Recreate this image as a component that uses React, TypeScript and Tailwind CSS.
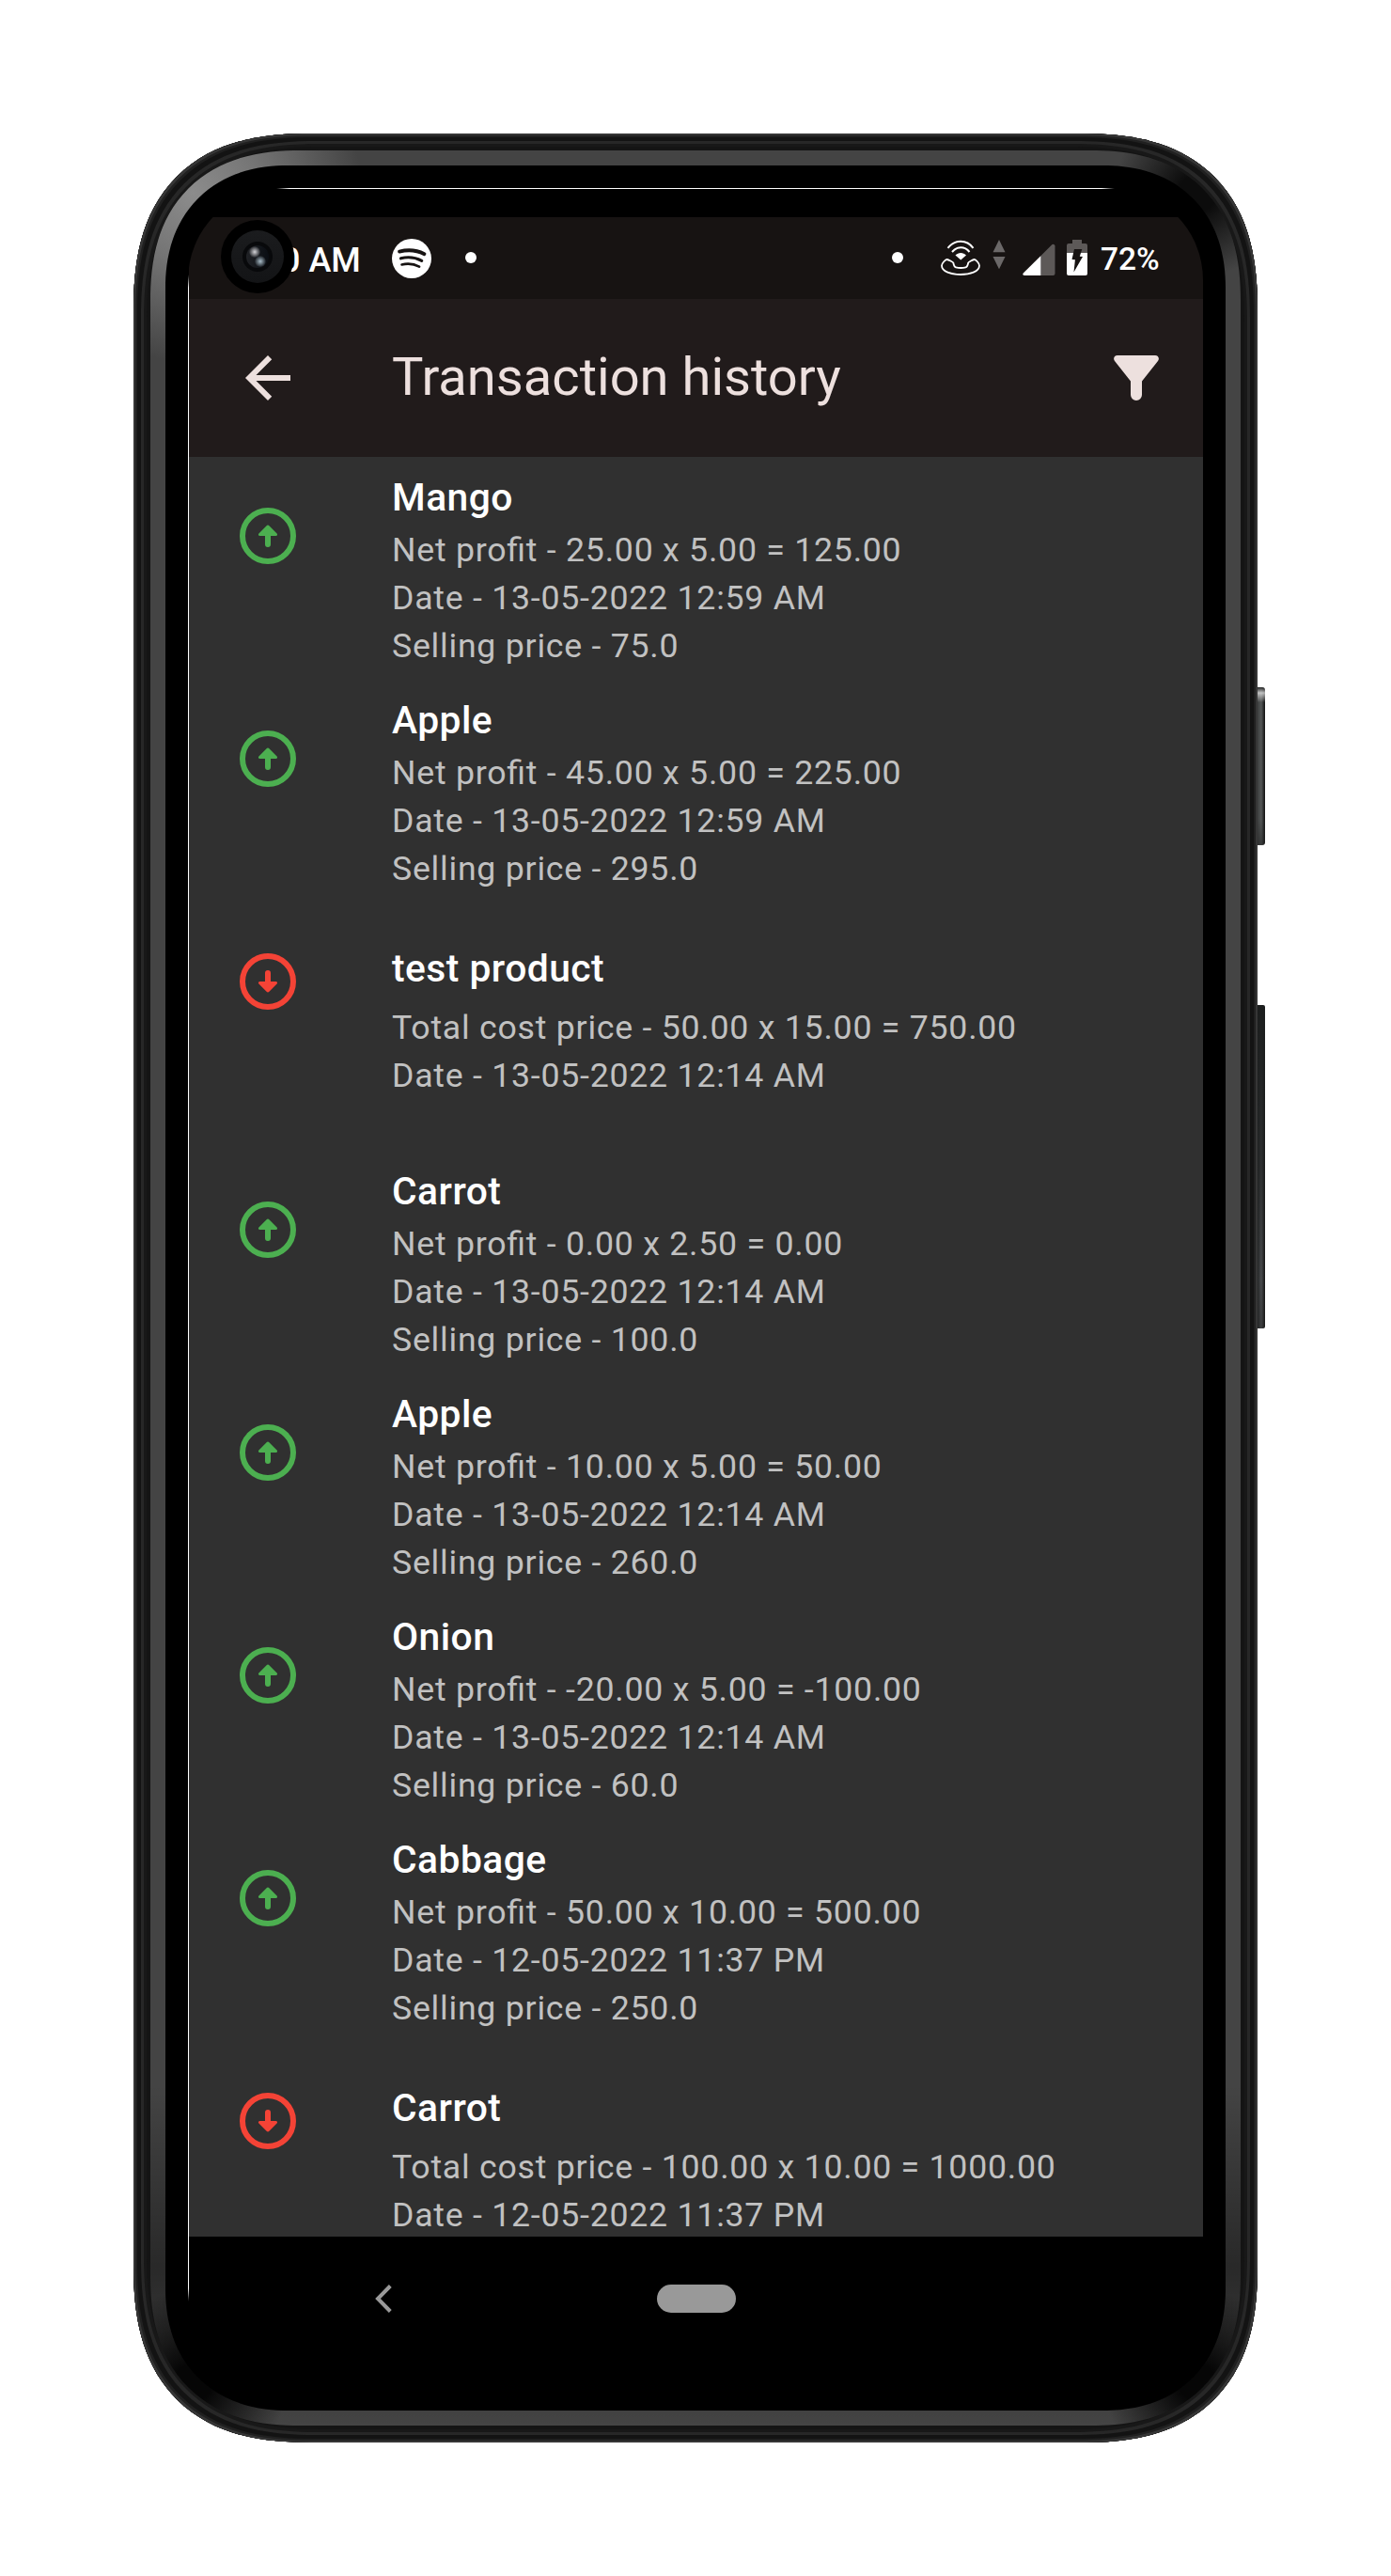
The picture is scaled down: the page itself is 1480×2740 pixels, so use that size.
import React from "react";

type Entry = {
  name: string;
  lines: string[];
  kind: "sale" | "purchase";
};

const entries: Entry[] = [
  { name: "Mango", kind: "sale", lines: ["Net profit - 25.00 x 5.00 = 125.00", "Date - 13-05-2022 12:59 AM", "Selling price - 75.0"] },
  { name: "Apple", kind: "sale", lines: ["Net profit - 45.00 x 5.00 = 225.00", "Date - 13-05-2022 12:59 AM", "Selling price - 295.0"] },
  { name: "test product", kind: "purchase", lines: ["Total cost price - 50.00 x 15.00 = 750.00", "Date - 13-05-2022 12:14 AM"] },
  { name: "Carrot", kind: "sale", lines: ["Net profit - 0.00 x 2.50 = 0.00", "Date - 13-05-2022 12:14 AM", "Selling price - 100.0"] },
  { name: "Apple", kind: "sale", lines: ["Net profit - 10.00 x 5.00 = 50.00", "Date - 13-05-2022 12:14 AM", "Selling price - 260.0"] },
  { name: "Onion", kind: "sale", lines: ["Net profit - -20.00 x 5.00 = -100.00", "Date - 13-05-2022 12:14 AM", "Selling price - 60.0"] },
  { name: "Cabbage", kind: "sale", lines: ["Net profit - 50.00 x 10.00 = 500.00", "Date - 12-05-2022 11:37 PM", "Selling price - 250.0"] },
  { name: "Carrot", kind: "purchase", lines: ["Total cost price - 100.00 x 10.00 = 1000.00", "Date - 12-05-2022 11:37 PM"] },
];

function DirectionIcon({ down }: { down: boolean }) {
  return (
    <svg
      viewBox="0 0 60 60"
      className={down ? "size-[60px] rotate-180 text-[#f44336]" : "size-[60px] text-[#4caf50]"}
      fill="none"
    >
      <circle cx="30" cy="30" r="27" stroke="currentColor" strokeWidth="6" />
      <path
        d="M28.6 19.2a2 2 0 0 1 2.8 0l8.2 8.2c1 1 .3 2.6-1 2.6H33v9a3 3 0 0 1-6 0v-9h-5.600c-1.300 0-2-1.600-1-2.600z"
        fill="currentColor"
      />
    </svg>
  );
}

function Row({ entry }: { entry: Entry }) {
  const sale = entry.kind === "sale";
  return (
    <li className={sale ? "flex h-[237px] shrink-0" : "flex h-[264px] shrink-0"}>
      <div className="w-[216px] shrink-0 pt-[54px] pl-[54px]">
        <DirectionIcon down={!sale} />
      </div>
      <div className={sale ? "pt-[13px]" : "pt-10"}>
        <h2 className="text-[40.8px] leading-[60px] font-medium tracking-[0.45px] whitespace-nowrap text-white">
          {entry.name}
        </h2>
        <div className={sale ? "pt-px" : "pt-2"}>
          {entry.lines.map((line) => (
            <p
              key={line}
              className="text-[35.7px] leading-[51px] tracking-[0.75px] whitespace-nowrap text-[#c1c1c1] [font-feature-settings:'liga']"
            >
              {line}
            </p>
          ))}
        </div>
      </div>
    </li>
  );
}

function StatusBar() {
  return (
    <div className="flex h-[87px] shrink-0 bg-[#171312] text-white">
      <span className="ml-[98px] w-[96px] pt-[25px] text-[36px] leading-[42px] font-medium whitespace-nowrap">0 AM</span>
      <svg viewBox="0 0 42 42" className="mt-[23px] ml-[22px] size-[42px]" fill="none">
        <circle cx="21" cy="21" r="21" fill="#fff" />
        <g stroke="#171312" strokeLinecap="round">
          <path d="M8 13.600c9-2.300 18.500-1.500 26.500 2.600" strokeWidth="3.800" />
          <path d="M9.500 20.800c7.600-1.900 15.500-1 22.200 2.500" strokeWidth="3.200" />
          <path d="M10.500 27.400c6.400-1.500 13-.8 18.600 2.200" strokeWidth="2.600" />
        </g>
      </svg>
      <span className="mt-[37px] ml-[36px] size-3 rounded-full bg-white" />
      <span className="mt-[37px] ml-[442px] size-3 rounded-full bg-white" />
      <svg viewBox="0 0 42 38" className="mt-[24px] ml-[40px] h-[38px] w-[42px]" fill="none" stroke="#fff">
        <path d="M7.500 8.800C15-.6 27.500-.6 34.500 8.800" strokeWidth="2" />
        <path d="M12 13c5-6.200 13.500-6.200 18.500 0" strokeWidth="2" />
        <path d="M15.500 16.500c3-3.500 8.500-3.500 11.500 0l-5.700 5z" fill="#fff" stroke="none" />
        <path
          d="M6.500 21c1.500.3 6.500 2.500 6.800 3.500.5 2.500 1.200 4.500 2.700 4.800 3 .8 7.500.8 10.500 0 1.500-.3 2.200-2.300 2.700-4.800.3-1 5-3.200 6.500-3.500 1.300-.2 5.300 4 5.300 6.500C41 34 31 37 21 37S1 34 1 27.500C1 25 5.200 20.800 6.500 21z"
          strokeWidth="1.800"
        />
      </svg>
      <svg viewBox="0 0 14 32" className="mt-[24px] ml-[13px] h-8 w-[14px]" fill="#6b6868">
        <path d="M7 0l6.500 13.300H.5zM.5 18h13L7 31.300z" />
      </svg>
      <svg viewBox="0 0 35 35" className="mt-[28px] ml-[18px] size-[35px]">
        <path d="M31.500 1a2 2 0 0 1 3 1.500V32a2 2 0 0 1-2 2H20V12.500z" fill="#5d5958" />
        <path d="M19.500 13v21H2c-2 0-2.200-1.500-1-2.700z" fill="#fff" />
      </svg>
      <svg viewBox="0 0 22 38" className="mt-[24px] ml-[12px] h-[38px] w-[22px]">
        <path d="M6 0h10v4h4a2 2 0 0 1 2 2v8H0V6a2 2 0 0 1 2-2h4z" fill="#5d5958" />
        <path d="M0 14h22v22a2 2 0 0 1-2 2H2a2 2 0 0 1-2-2z" fill="#fff" />
        <path d="M8 10h8.300l-2.500 7.800 3.200.3L7.500 34.500l1.400-13.300-3.400-.3z" fill="#171312" />
      </svg>
      <span className="mt-[24px] ml-[14px] text-[33.500px] leading-[42px] font-medium whitespace-nowrap">72%</span>
    </div>
  );
}

function AppBar() {
  return (
    <header className="flex h-[168px] shrink-0 items-center bg-[#211b1b] text-[#ede0de]">
      <svg viewBox="0 0 24 24" className="ml-[48px] size-[72px]" fill="currentColor">
        <path d="M20 11H7.830l5.590-5.590L12 4l-8 8 8 8 1.410-1.410L7.830 13H20v-2z" />
      </svg>
      <h1 className="ml-[96px] flex-1 pb-[2px] text-[56.1px] leading-[72px] whitespace-nowrap">Transaction history</h1>
      <svg viewBox="0 0 48 48" className="mr-[47px] size-[48px]" fill="currentColor">
        <path d="M4 0h40c3.500 0 5 3.300 3 6L30 27.500V42a6 6 0 0 1-12 0V27.500L1 6C-1 3.300.5 0 4 0z" />
      </svg>
    </header>
  );
}

function NavBar() {
  return (
    <nav className="flex h-[161px] shrink-0 pt-[51px]">
      <svg viewBox="0 0 18 30" className="ml-[198px] h-[30px] w-[18px]" fill="none">
        <path d="M16.300 1.500L3 15l13.300 13.500" stroke="#999" strokeWidth="4" />
      </svg>
      <span className="ml-[282px] h-[30px] w-[84px] rounded-full bg-[#999]" />
    </nav>
  );
}

function Camera() {
  return (
    <div className="absolute top-[34px] left-[35px] flex size-[78px] items-center justify-center rounded-full bg-black">
      <div className="flex size-[56px] items-center justify-center rounded-full bg-linear-to-b from-[#1b1c1e] to-[#131416]">
        <div className="relative size-8 rounded-full bg-[#08090b]">
          <div className="absolute top-[4px] left-[4px] size-6 rounded-full bg-linear-to-r from-[#45484e66] to-[#0b101899]" />
          <div className="absolute top-[5px] left-[7px] size-3 rounded-full bg-radial from-[#d4d4d8] to-transparent to-75%" />
          <div className="absolute top-[15px] left-[13px] size-3 rounded-full bg-radial from-[#a9bdc9] to-transparent to-75%" />
        </div>
      </div>
    </div>
  );
}

export default function App() {
  return (
    <main className="flex h-[2740px] w-[1480px] bg-white pt-[142px] pl-[142px] font-['Roboto',sans-serif]">
      <div className="h-[2456px] w-[1196px] rounded-[190px] bg-[#141414] p-[18px] [corner-shape:superellipse(1.32)] shadow-[inset_0_0_0_2px_#363636,inset_0_0_0_4px_#202020,inset_0_0_0_8px_#131313,inset_0_0_0_11px_#272727,inset_0_0_0_14px_#181818]">
        <div className="h-full rounded-[160px] p-4 [corner-shape:superellipse(1.25)] bg-[radial-gradient(circle_at_45px_45px,#8c8c8c_0,#8c8c8cb0_70px,transparent_180px),radial-gradient(circle_at_1115px_45px,#0c0c0c_20px,transparent_90px),radial-gradient(circle_at_45px_2375px,#060606_20px,transparent_100px),radial-gradient(circle_at_1115px_2375px,#060606_20px,transparent_100px),linear-gradient(transparent_85%,#0006_93%,transparent),linear-gradient(#444,#444)]">
          <div className="h-full rounded-[130px] bg-black p-6 [corner-shape:superellipse(1.15)]">
            <div className="relative flex h-[2340px] w-[1080px] flex-col overflow-hidden rounded-[98px] bg-black pt-[31px] pl-px">
              <StatusBar />
              <AppBar />
              <ul className="flex h-[1893px] shrink-0 flex-col overflow-hidden bg-[#303030]">
                {entries.map((entry, i) => (
                  <Row key={i} entry={entry} />
                ))}
              </ul>
              <NavBar />
              <Camera />
              <div className="absolute top-0 right-[94px] left-[94px] h-px bg-[linear-gradient(90deg,transparent,#fff_14px,#fff_calc(100%-14px),transparent)]" />
              <div className="absolute top-[92px] bottom-[92px] left-0 w-px bg-[linear-gradient(transparent,#fff_14px,#fff_calc(100%-14px),transparent)]" />
            </div>
          </div>
        </div>
      </div>
      <div className="flex w-2 flex-col pt-[589px]">
        <div className="h-[168px] shrink-0 rounded-r-[3px] bg-[linear-gradient(#0008_0,#fffa_6px,transparent_16px,transparent_140px,#2228),linear-gradient(90deg,#3c3e3e,#555858_50%,#2a2b2b_80%,#111)]" />
        <div className="mt-[170px] h-[344px] shrink-0 rounded-r-[2px] bg-[linear-gradient(#1c1e1e_0,#1c1e1e99_50%,transparent_85%,#2225),linear-gradient(90deg,#252727,#4b4d50_50%,#2a2b2b_80%,#111)]" />
      </div>
    </main>
  );
}
